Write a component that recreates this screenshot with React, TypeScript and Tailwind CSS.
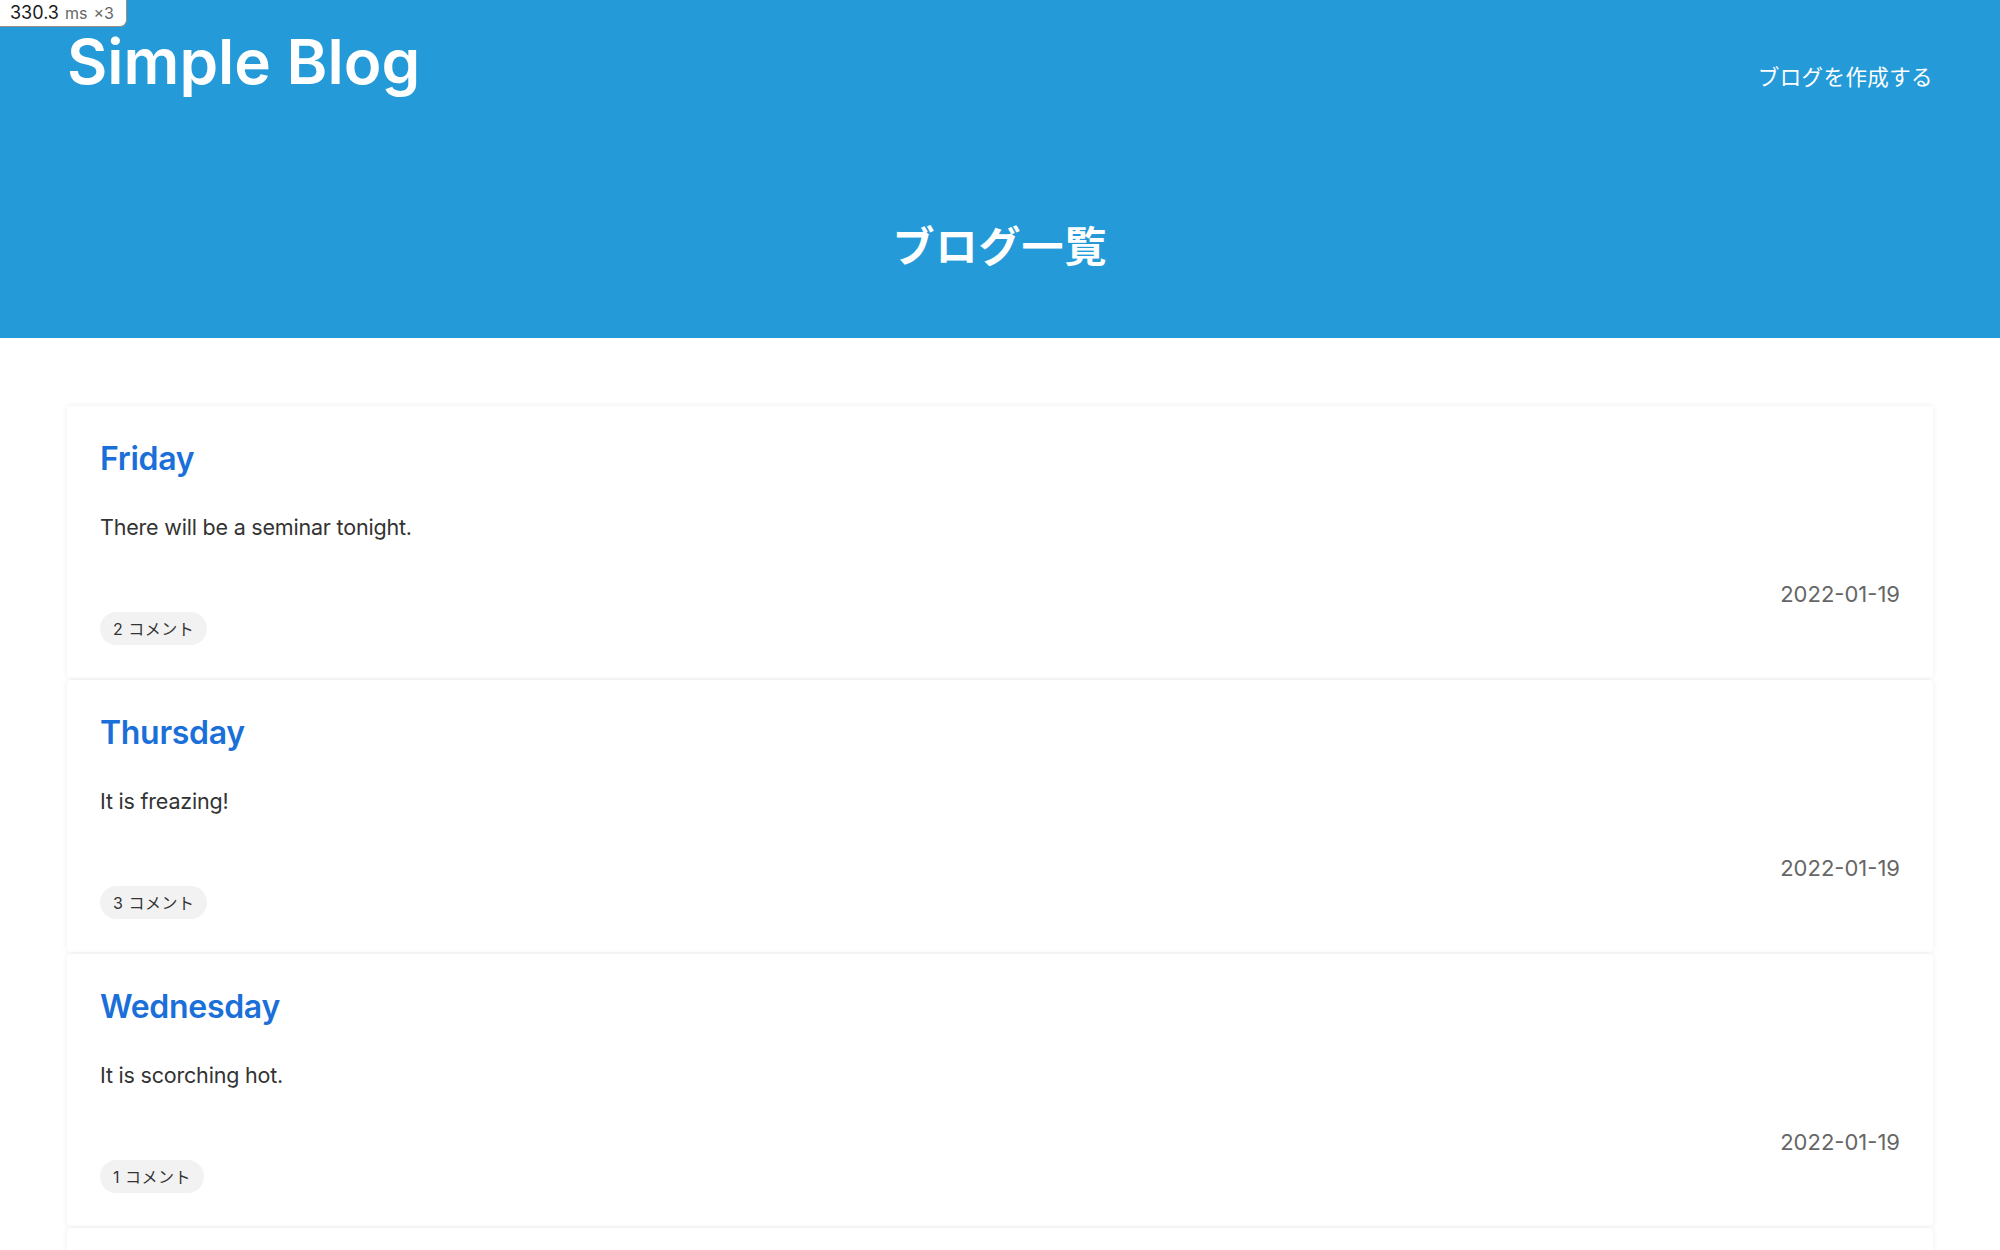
const posts = [
  { id: 1, title: 'Friday', body: 'There will be a seminar tonight.', date: '2022-01-19', comments: 2 },
  { id: 2, title: 'Thursday', body: 'It is freazing!', date: '2022-01-19', comments: 3 },
  { id: 3, title: 'Wednesday', body: 'It is scorching hot.', date: '2022-01-19', comments: 1 },
  { id: 4, title: 'Tuesday', body: 'Rainy day.', date: '2022-01-18', comments: 0 },
];

export default function App() {
  return (
    <div className="min-h-screen bg-white font-['Inter','Noto_Sans_CJK_JP',sans-serif] relative">
      {/* timing badge */}
      <div className="absolute left-0 top-0 z-10 h-[27px] w-[127px] bg-white border-r border-b border-[#9a8f88] rounded-br-[7px] flex items-center pl-[10px] gap-[6px]">
        <span className="text-[18px] text-[#1a1a1a] leading-none">330.3</span>
        <span className="text-[16px] text-[#666] leading-none">ms</span>
        <span className="text-[16px] text-[#666] leading-none">×3</span>
      </div>

      {/* Header */}
      <header className="bg-[#259ad8] h-[338px] px-[67px] flex flex-col">
        <div className="flex items-start justify-between">
          <h1 className="text-[62px] font-semibold text-white leading-none pt-[31px]">Simple Blog</h1>
          <a className="text-[21.5px] text-white pt-[61px] tracking-[0.4px]">ブログを作成する</a>
        </div>
        <h2 className="text-center text-white font-bold text-[42px] leading-none mt-[133px] tracking-[1px]">ブログ一覧</h2>
      </header>

      {/* Posts */}
      <main className="px-[67px] pt-[68px]">
        {posts.map((post) => (
          <div
            key={post.id}
            className="bg-white rounded-[4px] shadow-[0_0_6px_rgba(0,0,0,0.07)] px-[33px] pt-[32px] pb-[33px] mb-[2px]"
          >
            <h3 className="text-[32px] font-semibold text-[#1b6fd8] leading-[41px] tracking-[-0.3px]">{post.title}</h3>
            <p className="text-[21.5px] text-[#333] leading-[33px] mt-[32px] tracking-[-0.2px]">{post.body}</p>
            <div className="flex justify-end mt-[34px]">
              <span className="text-[22px] text-[#666] leading-[33px]">{post.date}</span>
            </div>
            <div className="mt-[1px]">
              <span className="inline-flex items-center h-[33px] px-[13px] rounded-full bg-[#f2f2f2] text-[16px] text-[#333] tracking-[0.5px]">
                {post.comments} コメント
              </span>
            </div>
          </div>
        ))}
      </main>
    </div>
  );
}
